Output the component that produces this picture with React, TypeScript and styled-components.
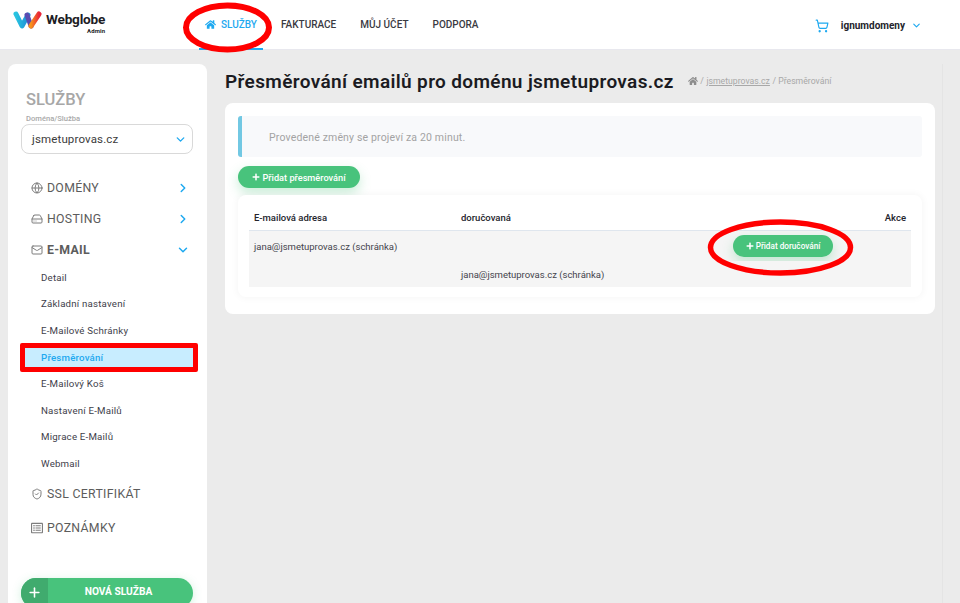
import React from "react";
import styled, { createGlobalStyle } from "styled-components";
import { ShoppingCart, ChevronDown, ChevronRight, Globe, HardDrive, Mail, ShieldCheck, Plus } from "lucide-react";
import { FaHome, FaPlus, FaRegListAlt } from "react-icons/fa";

const Global = createGlobalStyle`
  html, body { margin: 0; padding: 0; background: #ebebeb; }
  * { box-sizing: border-box; }
  body { font-family: Roboto, "Liberation Sans", sans-serif; color: #333; }
`;

const Page = styled.div`
  position: relative;
  width: 960px;
  height: 603px;
  overflow: hidden;
  background: #ebebeb;
`;

const Header = styled.header`
  height: 50px;
  background: #fff;
  display: flex;
  align-items: center;
  border-bottom: 1px solid #e8e8ee;
`;

const Logo = styled.div`
  width: 199px;
  padding: 0 0 4px 13px;
  display: flex;
  align-items: flex-start;
  gap: 4px;
`;

const LogoText = styled.div`
  display: flex;
  flex-direction: column;
  align-items: flex-end;
  font-weight: 700;
  color: #1d1d25;
  font-size: 13.6px;
  line-height: 14px;
  padding-top: 2px;
  letter-spacing: -0.2px;
`;

const LogoSub = styled.span`
  margin-top: 1px;
  font-size: 6px;
  line-height: 8px;
  letter-spacing: 0.1px;
`;

const TopNav = styled.nav`
  display: flex;
  height: 50px;
`;

const TopLink = styled.a<{ $active?: boolean }>`
  display: flex;
  align-items: center;
  gap: 5px;
  height: 50px;
  padding: 2px 6px 0;
  margin-right: 12px;
  font-size: 10px;
  font-weight: 500;
  color: ${(p) => (p.$active ? "#1ea9f0" : "#3a3a42")};
  border-bottom: 2px solid ${(p) => (p.$active ? "#1ea9f0" : "transparent")};
`;

const UserBox = styled.div`
  margin-left: auto;
  padding: 2px 38px 0 0;
  display: flex;
  align-items: center;
  color: #24242c;
  font-size: 10px;
  font-weight: 700;
`;

const UserName = styled.span`
  margin: 0 6px 0 12px;
`;

const Content = styled.div`
  display: flex;
  height: 553px;
  padding: 14px 0 0 8px;
`;

const Sidebar = styled.aside`
  width: 199px;
  height: 560px;
  flex-shrink: 0;
  background: #fff;
  border-radius: 8px 8px 0 0;
  padding: 27px 14px 16px 13px;
  display: flex;
  flex-direction: column;
`;

const SideTitle = styled.h2`
  margin: 0 0 0 5px;
  font-size: 16.5px;
  line-height: 18px;
  font-weight: 500;
  color: #a7a7a7;
`;

const FieldLabel = styled.div`
  margin: 5px 0 0 5px;
  font-size: 7.6px;
  line-height: 10px;
  font-weight: 500;
  color: #a9a9a9;
`;

const Select = styled.div`
  height: 30px;
  border: 1px solid #d9d9d9;
  border-radius: 8px;
  display: flex;
  align-items: center;
  justify-content: space-between;
  padding: 0 5px 0 10px;
  font-size: 11.5px;
  letter-spacing: 0.15px;
  color: #3c3c3c;
`;

const NavItem = styled.div<{ $gapTop: number; $open?: boolean }>`
  margin-top: ${(p) => p.$gapTop}px;
  height: 18px;
  padding: 0 3px 0 10px;
  display: flex;
  align-items: center;
  gap: 4px;
  font-size: 12.3px;
  letter-spacing: 0.3px;
  font-weight: ${(p) => (p.$open ? 700 : 400)};
  color: #5c5c5c;
`;

const NavIcon = styled.span`
  width: 12px;
  display: flex;
  color: #7d7d7d;
`;

const NavArrow = styled.span`
  margin-left: auto;
  display: flex;
  color: #1ea9f0;
`;

const SubList = styled.div`
  margin-top: 5px;
  display: flex;
  flex-direction: column;
`;

const SubItem = styled.a<{ $active?: boolean }>`
  height: 26.6px;
  display: flex;
  align-items: center;
  padding-left: 20px;
  font-size: 9.7px;
  letter-spacing: 0.2px;
  font-weight: ${(p) => (p.$active ? 500 : 400)};
  color: ${(p) => (p.$active ? "#1ea9f0" : "#3e3e4a")};
  background: ${(p) => (p.$active ? "#c8edff" : "transparent")};
`;

const NewService = styled.div`
  margin-top: auto;
  height: 30px;
  flex-shrink: 0;
  border-radius: 15px;
  background: #48c37c;
  display: flex;
  overflow: hidden;
  color: #fff;
  font-size: 10.2px;
  font-weight: 700;
  box-shadow: 0 2px 10px rgba(72, 195, 124, 0.25);
`;

const NewServiceIcon = styled.div`
  width: 27px;
  background: #40ab6e;
  display: flex;
  align-items: center;
  justify-content: center;
  padding-bottom: 1px;
`;

const NewServiceLabel = styled.div`
  flex: 1;
  padding-right: 4px;
  text-align: center;
  line-height: 28px;
`;

const Main = styled.main`
  width: 710px;
  margin-left: 18px;
  flex-shrink: 0;
`;

const TitleRow = styled.div`
  display: flex;
  align-items: center;
  height: 39px;
  padding-bottom: 5px;
`;

const Title = styled.h1`
  margin: 0;
  font-size: 19px;
  font-weight: 600;
  letter-spacing: 0.36px;
  color: #1b1b22;
  white-space: nowrap;
`;

const Crumbs = styled.div`
  display: flex;
  align-items: center;
  margin-left: 14px;
  font-size: 8.7px;
  color: #a8a8a8;
  gap: 2.5px;
`;

const CrumbHome = styled(FaHome)`
  color: #8d8d8d;
  font-size: 10px;
`;

const CrumbLink = styled.span`
  text-decoration: underline;
`;

const Card = styled.section`
  height: 211px;
  background: #fff;
  border-radius: 8px;
  padding: 13px 13px 0;
`;

const Notice = styled.div`
  height: 41px;
  background: #f8f9fb;
  border-left: 4px solid #72c8e3;
  border-radius: 3px;
  display: flex;
  align-items: center;
  padding: 2px 0 0 27px;
  font-size: 10.5px;
  letter-spacing: 0.16px;
  color: #a3a3a3;
`;

const GreenButton = styled.button`
  border: 0;
  height: 22px;
  border-radius: 11px;
  background: #48c37c;
  color: #fff;
  font-family: inherit;
  font-size: 9.2px;
  font-weight: 500;
  display: inline-flex;
  align-items: center;
  justify-content: center;
  gap: 2px;
  padding: 0;
  box-shadow: 0 5px 12px rgba(72, 195, 124, 0.3);
`;

const AddForward = styled(GreenButton)`
  width: 122px;
  margin-top: 9px;
  display: flex;
`;

const TableCard = styled.div`
  margin-top: 7px;
  height: 102px;
  border-radius: 8px;
  background: #fff;
  box-shadow: 0 0 8px rgba(0, 0, 0, 0.05);
  padding: 10px 11px 0;
`;

const Grid = styled.div`
  display: grid;
  grid-template-columns: 207px 1fr 150px;
  font-size: 9.5px;
  color: #44444c;
`;

const HeadCell = styled.div<{ $right?: boolean }>`
  height: 26px;
  padding: 0 5px;
  display: flex;
  align-items: center;
  font-weight: 500;
  color: #24242c;
  justify-content: ${(p) => (p.$right ? "flex-end" : "flex-start")};
  border-bottom: 1px solid #dfe6ee;
`;

const Cell = styled.div<{ $height: number }>`
  height: ${(p) => p.$height}px;
  padding: 0 5px;
  background: #f5f5f5;
  display: flex;
  align-items: center;
`;

const ActionCell = styled(Cell)`
  padding: 0;
  justify-content: flex-start;
`;

const AddDelivery = styled(GreenButton)`
  flex-shrink: 0;
  width: 100px;
  font-size: 8.2px;
  margin-left: -28px;
`;

const SideStripe = styled.div`
  position: absolute;
  left: 942px;
  top: 64px;
  width: 18px;
  height: 539px;
  border-left: 1px solid #e4e4e4;
`;

const RedOval = styled.svg`
  position: absolute;
  overflow: visible;
  pointer-events: none;
`;

const TopOval = styled(RedOval)`
  left: 183px;
  top: 3px;
`;

const RowOval = styled(RedOval)`
  left: 708px;
  top: 220px;
`;

const RedBox = styled.div`
  position: absolute;
  left: 20px;
  top: 343px;
  width: 178px;
  height: 29px;
  border: 5px solid #ff0000;
  border-radius: 2px;
`;

const subs = ["Detail", "Základní nastavení", "E-Mailové Schránky", "Přesměrování", "E-Mailový Koš", "Nastavení E-Mailů", "Migrace E-Mailů", "Webmail"];

export default function App() {
  return (
    <Page>
      <Global />
      <Header>
        <Logo>
          <svg width="29" height="20" viewBox="0 0 29 20">
            <defs>
              <linearGradient id="wgA" x1="0" y1="0" x2="1" y2="0">
                <stop offset="0" stopColor="#28c4e0" />
                <stop offset="1" stopColor="#1f8fd6" />
              </linearGradient>
              <linearGradient id="wgB" x1="0" y1="0" x2="1" y2="0">
                <stop offset="0" stopColor="#f7931b" />
                <stop offset="1" stopColor="#e8263a" />
              </linearGradient>
            </defs>
            <path d="M3 4 L9 16 L15 5" fill="none" stroke="url(#wgA)" strokeWidth="5" strokeLinecap="round" strokeLinejoin="round" />
            <path d="M14 5 L18 16" fill="none" stroke="#5a4bb0" strokeWidth="5" strokeLinecap="round" />
            <path d="M18 16 L26 4" fill="none" stroke="url(#wgB)" strokeWidth="5" strokeLinecap="round" />
          </svg>
          <LogoText>
            Webglobe
            <LogoSub>Admin</LogoSub>
          </LogoText>
        </Logo>
        <TopNav>
          <TopLink $active>
            <FaHome size={11} />
            SLUŽBY
          </TopLink>
          <TopLink>FAKTURACE</TopLink>
          <TopLink>MŮJ ÚČET</TopLink>
          <TopLink>PODPORA</TopLink>
        </TopNav>
        <UserBox>
          <ShoppingCart size={14} color="#1ea9f0" strokeWidth={2} />
          <UserName>ignumdomeny</UserName>
          <ChevronDown size={11} color="#1ea9f0" strokeWidth={2.5} />
        </UserBox>
      </Header>
      <Content>
        <Sidebar>
          <SideTitle>SLUŽBY</SideTitle>
          <FieldLabel>Doména/Služba</FieldLabel>
          <Select>
            jsmetuprovas.cz
            <ChevronDown size={13} color="#1ea9f0" strokeWidth={2.5} />
          </Select>
          <NavItem $gapTop={25}>
            <NavIcon><Globe size={12} /></NavIcon>
            DOMÉNY
            <NavArrow><ChevronRight size={14} strokeWidth={2.5} /></NavArrow>
          </NavItem>
          <NavItem $gapTop={13}>
            <NavIcon><HardDrive size={12} /></NavIcon>
            HOSTING
            <NavArrow><ChevronRight size={14} strokeWidth={2.5} /></NavArrow>
          </NavItem>
          <NavItem $gapTop={13} $open>
            <NavIcon><Mail size={12} /></NavIcon>
            E-MAIL
            <NavArrow><ChevronDown size={14} strokeWidth={2.5} /></NavArrow>
          </NavItem>
          <SubList>
            {subs.map((s) => (
              <SubItem key={s} $active={s === "Přesměrování"}>{s}</SubItem>
            ))}
          </SubList>
          <NavItem $gapTop={8}>
            <NavIcon><ShieldCheck size={12} /></NavIcon>
            SSL CERTIFIKÁT
          </NavItem>
          <NavItem $gapTop={16}>
            <NavIcon><FaRegListAlt size={12} /></NavIcon>
            POZNÁMKY
          </NavItem>
          <NewService>
            <NewServiceIcon><Plus size={15} strokeWidth={2.5} /></NewServiceIcon>
            <NewServiceLabel>NOVÁ SLUŽBA</NewServiceLabel>
          </NewService>
        </Sidebar>
        <Main>
          <TitleRow>
            <Title>Přesměrování emailů pro doménu jsmetuprovas.cz</Title>
            <Crumbs>
              <CrumbHome />
              /
              <CrumbLink>jsmetuprovas.cz</CrumbLink>
              / Přesměrování
            </Crumbs>
          </TitleRow>
          <Card>
            <Notice>Provedené změny se projeví za 20 minut.</Notice>
            <AddForward>
              <FaPlus size={8} />
              Přidat přesměrování
            </AddForward>
            <TableCard>
              <Grid>
                <HeadCell>E-mailová adresa</HeadCell>
                <HeadCell>doručovaná</HeadCell>
                <HeadCell $right>Akce</HeadCell>
                <Cell $height={30}>jana@jsmetuprovas.cz (schránka)</Cell>
                <Cell $height={30} />
                <ActionCell $height={30}>
                  <AddDelivery>
                    <FaPlus size={8} />
                    Přidat doručování
                  </AddDelivery>
                </ActionCell>
                <Cell $height={26} />
                <Cell $height={26}>jana@jsmetuprovas.cz (schránka)</Cell>
                <Cell $height={26} />
              </Grid>
            </TableCard>
          </Card>
        </Main>
      </Content>
      <SideStripe />
      <TopOval width="89" height="49" viewBox="0 0 89 49">
        <ellipse cx="44.5" cy="24.5" rx="41.5" ry="22" fill="none" stroke="#ff0000" strokeWidth="6" />
      </TopOval>
      <RowOval width="145" height="55" viewBox="0 0 145 55">
        <ellipse cx="72.5" cy="27.5" rx="70" ry="25.5" fill="none" stroke="#ff0000" strokeWidth="5.5" />
      </RowOval>
      <RedBox />
    </Page>
  );
}
